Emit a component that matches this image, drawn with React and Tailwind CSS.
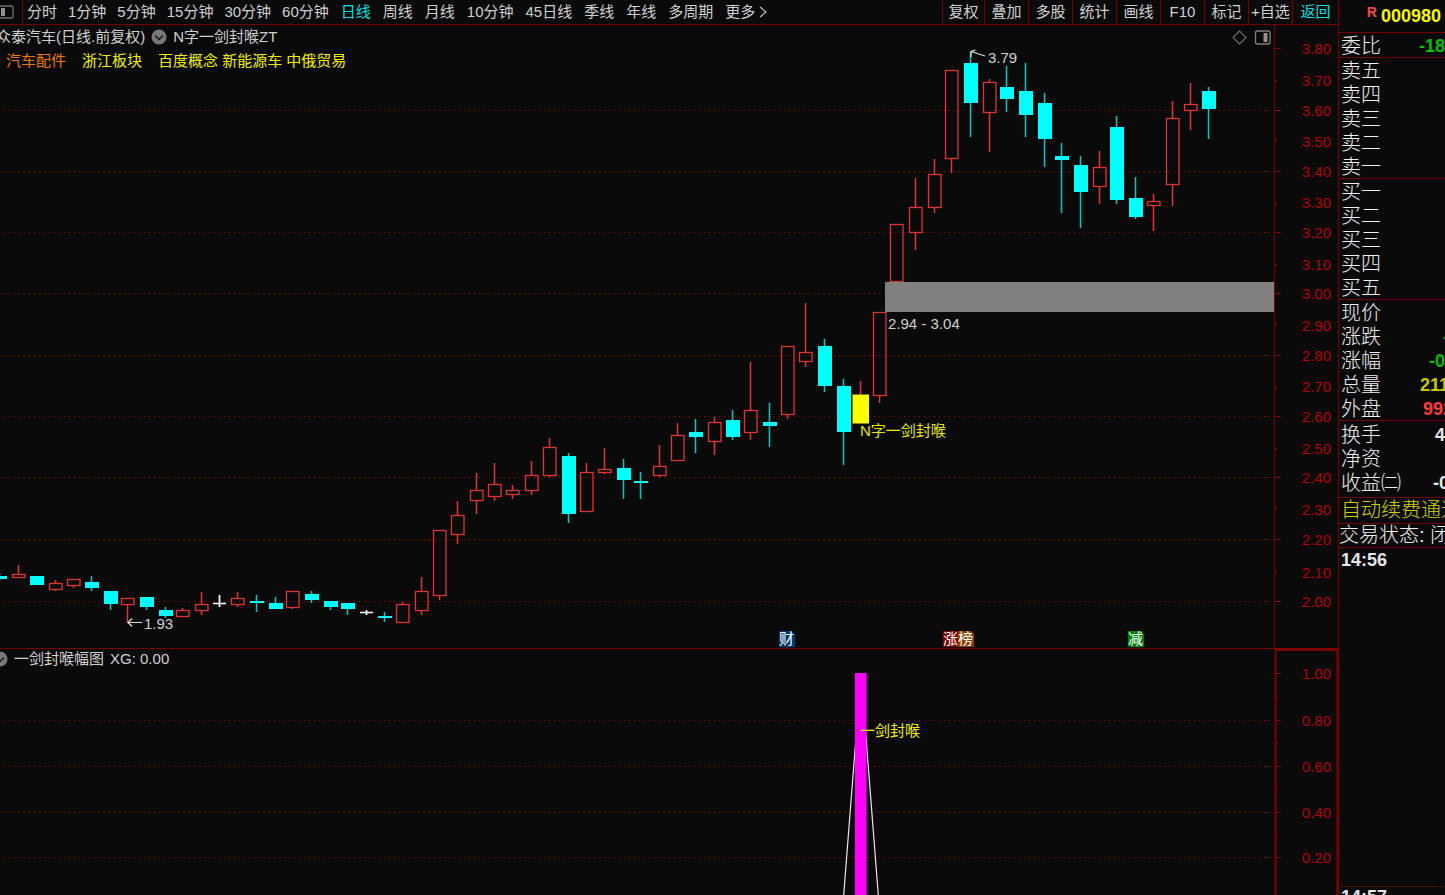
import React, { useState } from "react";

const minutePeriods = ["分时", "1分钟", "5分钟", "15分钟", "30分钟", "60分钟"];

const longPeriods = [
  "日线", "周线", "月线", "10分钟", "45日线", "季线", "年线", "多周期", "更多",
];

const tools = ["复权", "叠加", "多股", "统计", "画线", "F10", "标记", "+自选"];

// type, center x, body top, body bottom, wick top, wick bottom
// u = up (hollow red), d = down (solid cyan), f = flat (white), y = signal bar
const candles = [
  ["d", 0, 576, 579, 573, 581],
  ["u", 19, 574, 577, 565, 578],
  ["d", 36.5, 576, 585, 576, 585],
  ["u", 55.5, 583, 589, 580, 591],
  ["u", 74, 579, 585, 579, 588],
  ["d", 91.5, 582, 588, 576, 591],
  ["d", 110.5, 591, 604, 591, 610],
  ["u", 128, 598, 604, 598, 623],
  ["d", 146.5, 597, 607, 597, 610],
  ["d", 165.5, 610, 616, 607, 618],
  ["u", 183, 610, 616, 608, 616],
  ["u", 202, 604, 610, 592, 615],
  ["f", 220, 603, 604, 595, 607],
  ["u", 238, 598, 604, 592, 607],
  ["d", 256.5, 601, 603, 595, 612],
  ["d", 275.5, 603, 609, 597, 609],
  ["u", 293, 591, 607, 591, 609],
  ["d", 311.5, 594, 600, 591, 603],
  ["d", 330.5, 601, 607, 601, 610],
  ["d", 348, 603, 609, 603, 615],
  ["f", 366.5, 612, 613, 610, 615],
  ["d", 384.5, 616, 618, 612, 622],
  ["u", 403, 604, 622, 602, 622],
  ["u", 421.5, 591, 610, 577, 615],
  ["u", 439.5, 530, 595, 530, 600],
  ["u", 458, 515, 534, 501, 544],
  ["u", 477, 490, 500, 473, 514],
  ["u", 494.5, 484, 496, 463, 501],
  ["u", 513, 490, 494, 485, 499],
  ["u", 532, 475, 490, 461, 495],
  ["u", 549.5, 447, 475, 438, 477],
  ["d", 568.5, 456, 514, 453, 523],
  ["u", 587, 472, 511, 463, 511],
  ["u", 604.5, 469, 472, 448, 474],
  ["d", 623.5, 468, 480, 459, 499],
  ["d", 640.5, 481, 483, 472, 499],
  ["u", 659.5, 466, 475, 445, 477],
  ["u", 678, 435, 460, 423, 461],
  ["d", 695.5, 432, 437, 419, 453],
  ["u", 714.5, 422, 441, 417, 455],
  ["d", 733, 420, 437, 410, 440],
  ["u", 750.5, 410, 432, 362, 440],
  ["d", 769.5, 422, 426, 403, 447],
  ["u", 788, 346, 414, 346, 419],
  ["u", 805.5, 352, 361, 303, 367],
  ["d", 824.5, 346, 386, 339, 392],
  ["d", 843.5, 386, 432, 379, 465],
  ["y", 860.5, 395, 423, 381, 423],
  ["u", 879.5, 312, 395, 312, 403],
  ["u", 897, 224, 281, 224, 281],
  ["u", 915.5, 207, 232, 178, 250],
  ["u", 934.5, 174, 207, 159, 213],
  ["u", 952, 70, 158, 70, 173],
  ["d", 970.5, 63, 103, 52, 137],
  ["u", 989.5, 82, 112, 79, 152],
  ["d", 1007, 87, 99, 66, 112],
  ["d", 1025.5, 91, 115, 63, 137],
  ["d", 1044.5, 103, 139, 93, 167],
  ["d", 1062, 156, 160, 143, 213],
  ["d", 1080.5, 165, 192, 156, 228],
  ["u", 1099.5, 167, 186, 151, 204],
  ["d", 1117, 127, 200, 116, 204],
  ["d", 1135.5, 198, 217, 177, 219],
  ["u", 1153.5, 201, 205, 194, 231],
  ["u", 1172.5, 118, 184, 101, 206],
  ["u", 1190.5, 104, 110, 83, 130],
  ["d", 1208.5, 91, 109, 87, 139],
];

// label, tick y
const priceTicks = [
  ["3.80", 48], ["3.70", 80], ["3.60", 110], ["3.50", 141], ["3.40", 171],
  ["3.30", 202], ["3.20", 232], ["3.10", 264], ["3.00", 293], ["2.90", 325],
  ["2.80", 355], ["2.70", 386], ["2.60", 416], ["2.50", 448], ["2.40", 477],
  ["2.30", 509], ["2.20", 539], ["2.10", 572], ["2.00", 601],
];

const ratioTicks = [["1.00", 673], ["0.80", 720], ["0.60", 766], ["0.40", 812], ["0.20", 857]];

const events = [
  ["财", 779, "#003a70"],
  ["涨", 943, "#800000"],
  ["榜", 958, "#8a4000"],
  ["减", 1128, "#008000"],
];

const quoteGroups = [
  [["卖五"], ["卖四"], ["卖三"], ["卖二"], ["卖一"]],
  [["买一"], ["买二"], ["买三"], ["买四"], ["买五"]],
  [
    ["现价"],
    ["涨跌", "-", "text-[#00c000] -mr-1"],
    ["涨幅", "-0", "text-[#00c000]"],
    ["总量", "211", "text-[#c8c800] -mr-1"],
    ["外盘", "992", "text-[#ff3838] -mr-2"],
  ],
];

const detailRows = [
  ["换手", "4", "text-[#e6e6e6]"],
  ["净资"],
  ["收益㈡", "-0", "text-[#e6e6e6] -mr-1"],
];

const Candle = ({ data }) => {
  const [type, x, top, bottom, high, low] = data;
  const color = type === "u" || type === "y" ? "#e03434" : type === "d" ? "#00c8c8" : "#e0e0e0";
  const left = Math.round(x - 7);
  const mid = left + 6.5;
  return (
    <g>
      {high < top && <path d={`M${mid} ${high}V${top}`} stroke={color} strokeWidth="1.5" />}
      {low > bottom && <path d={`M${mid} ${bottom}V${low}`} stroke={color} strokeWidth="1.5" />}
      {type === "u" && (
        <rect x={left + 0.5} y={top + 0.5} width="12.5" height={bottom - top} fill="none" stroke="#e03434" strokeWidth="1.3" />
      )}
      {type === "d" && <rect x={left} y={top} width="14" height={bottom - top} fill="#00ffff" />}
      {type === "f" && (
        <path d={`M${left} ${top + 0.5}h13M${mid} ${high}V${low}`} stroke="#ffffff" strokeWidth="1.4" />
      )}
      {type === "y" && <rect x="852.5" y={top - 0.5} width="16.5" height="29" fill="#ffff00" />}
    </g>
  );
};

const GridLine = ({ y }) => (
  <path d={`M4 ${y + 0.5}H1273`} stroke="#a00000" strokeDasharray="1 4" />
);

const AxisLabel = ({ y, children }) => (
  <text x="1331" y={y} textAnchor="end" fontSize="15" fill="#b00000">
    {children}
  </text>
);

const Chevron = () => (
  <svg viewBox="0 0 16 16" className="h-4 w-4 shrink-0">
    <circle cx="8" cy="8" r="7.5" fill="#787878" />
    <path d="M4 6.5L8 10.5L12 6.5" fill="none" stroke="#161616" strokeWidth="1.5" />
  </svg>
);

const PriceChart = () => (
  <svg viewBox="0 25 1338 623" className="col-start-1 row-start-1 block w-full">
    {priceTicks.map(([label, y], i) => (
      <g key={label}>
        {i > 0 && i % 2 === 0 && <GridLine y={y} />}
        <path d={`M1275 ${y + 0.5}h${i % 2 ? 2 : 6}`} stroke="#8c0000" />
        <AxisLabel y={y + 6}>{label}</AxisLabel>
      </g>
    ))}
    <path d="M1274.5 25V648" stroke="#780000" />
    {candles.map((c) => (
      <Candle key={c[1]} data={c} />
    ))}
    <rect x="885" y="282" width="389" height="30" fill="#808080" />
    <g fill="none" stroke="#e0e0e0" strokeWidth="1.2">
      <path d="M985 56L971 51.5M971 57V51.5L975.5 50" />
      <path d="M142 622.5H128M132 618.5L128 622.5L132 626.5" />
    </g>
    <g fontSize="15" fill="#d0d0d0">
      <text x="988" y="63">3.79</text>
      <text x="144" y="629">1.93</text>
      <text x="888" y="329">2.94 - 3.04</text>
    </g>
    <text x="860" y="436" fontSize="15" fill="#e8e800">N字一剑封喉</text>
    {events.map(([label, x, fill]) => (
      <g key={label}>
        <path d={`M${x} 631h13l3 3v13h-16z`} fill={fill} />
        <text x={x} y="644" fontSize="15" fill="#ffffff">{label}</text>
      </g>
    ))}
    <g fill="none" stroke="#646464" strokeWidth="1.3">
      <path d="M1239.5 31L1246 37.5L1239.5 44L1233 37.5Z" />
      <rect x="1255.5" y="31" width="14.5" height="13" rx="2" stroke="#808080" />
    </g>
    <rect x="1263.5" y="33" width="4" height="9" fill="#909090" />
  </svg>
);

const SignalChart = () => (
  <svg viewBox="0 649 1338 246" className="col-start-1 row-start-1 block w-full">
    {ratioTicks.map(([label, y], i) => (
      <g key={label}>
        {i > 0 && <GridLine y={y} />}
        <path d={`M1276 ${y + 0.5}h5`} stroke="#8c0000" />
        {i > 0 && <path d={`M1276 ${y - 22.5}h2`} stroke="#8c0000" />}
        <AxisLabel y={y + 6}>{label}</AxisLabel>
      </g>
    ))}
    <path d="M1275.5 895V650H1337.5V895" fill="none" stroke="#800000" strokeWidth="2" />
    <path d="M843 904L861 673L879 904" fill="none" stroke="#e8e8e8" strokeWidth="1.2" />
    <rect x="855" y="673" width="11.5" height="222" fill="#ff00ff" />
    <text x="860" y="736" fontSize="15" fill="#f0f000">一剑封喉</text>
  </svg>
);

const PeriodButton = ({ name, active, onSelect }) => (
  <button onClick={() => onSelect(name)} className={active ? "text-[#00e0e0]" : ""}>
    {name}
  </button>
);

const QuoteRow = ({ row: [label, value, style] }) => (
  <div className="flex h-6 items-center justify-between pt-[2px] whitespace-nowrap">
    <span>{label}</span>
    {value && <span className={`text-lg font-bold ${style}`}>{value}</span>}
  </div>
);

const QuotePanel = () => (
  <aside className="w-[107px] shrink-0 overflow-hidden border-l border-[#780000] text-xl font-light text-[#f0f0f0]">
    <div className="flex h-[33px] items-start justify-end gap-1 border-b border-[#780000] pr-1 font-bold">
      <span className="pt-1 text-sm leading-4 text-[#f04848]">R</span>
      <span className="text-lg leading-8 text-[#f8f800]">000980</span>
    </div>
    <div className="border-b border-[#780000] pl-[2px]">
      <QuoteRow row={["委比", "-18", "text-[#00c000]"]} />
    </div>
    {quoteGroups.map((rows) => (
      <div key={rows[0][0]} className="border-b border-[#780000] pl-[2px]">
        {rows.map((row) => (
          <QuoteRow key={row[0]} row={row} />
        ))}
      </div>
    ))}
    <div className="border-b border-[#780000] pt-[1px] pb-[3px] pl-[2px]">
      {detailRows.map((row) => (
        <QuoteRow key={row[0]} row={row} />
      ))}
    </div>
    <p className="border-b border-[#780000] pl-[2px] leading-[25px] whitespace-nowrap text-[#d0d000]">
      自动续费通道
    </p>
    <p className="border-b border-[#780000] leading-[23px] whitespace-nowrap">交易状态: 闭</p>
    <div className="h-[338px] pl-[2px] text-lg leading-6 font-bold text-[#e6e6e6]">14:56</div>
    <div className="mx-[2px] border-t border-dotted border-[#780000] text-lg leading-5 font-bold text-[#e6e6e6]">
      14:57
    </div>
  </aside>
);

const App = () => {
  const [period, setPeriod] = useState("日线");

  return (
    <div className="flex h-screen overflow-hidden bg-[#0a0a0a] font-['Liberation_Sans','Noto_Sans_CJK_SC',sans-serif] text-[15px] text-[#d0d0d0]">
      <main className="min-w-0 flex-1">
        <nav className="flex h-[25px] justify-between border-b border-[#780000] whitespace-nowrap">
          <div className="flex items-center">
            <button aria-label="侧栏" className="flex h-full w-[23px] items-center border-r border-[#780000]">
              <svg viewBox="0 0 14 14" className="h-[14px] w-[14px]">
                <rect x="-2" y="1" width="15" height="12" rx="2" fill="none" stroke="#707070" strokeWidth="1.3" />
                <rect x="1" y="3" width="4" height="8" fill="#909090" />
              </svg>
            </button>
            <div className="flex items-center gap-[11px] pl-1">
              {minutePeriods.map((p) => (
                <PeriodButton key={p} name={p} active={p === period} onSelect={setPeriod} />
              ))}
            </div>
            <div className="flex items-center gap-3 pl-3">
              {longPeriods.map((p) => (
                <PeriodButton key={p} name={p} active={p === period} onSelect={setPeriod} />
              ))}
            </div>
            <svg viewBox="0 0 8 12" className="ml-1 h-3 w-2">
              <path d="M1 1L7 6L1 11" fill="none" stroke="#c0c0c0" strokeWidth="1.2" />
            </svg>
          </div>
          <div className="flex">
            {tools.map((tool) => (
              <button key={tool} className="w-11 border-l border-[#780000] text-center first:w-[42px]">
                {tool}
              </button>
            ))}
            <button className="w-[46px] border-l border-[#780000] text-[#00e0e0]">返回</button>
          </div>
        </nav>

        <section className="grid">
          <PriceChart />
          <header className="z-10 col-start-1 row-start-1 leading-6 whitespace-nowrap">
            <div className="-ml-1 flex items-center gap-[6px]">
              <h1>众泰汽车(日线.前复权)</h1>
              <Chevron />
              <span>N字一剑封喉ZT</span>
            </div>
            <div className="flex gap-4 pl-[6px] text-[#f0f000]">
              <span className="text-[#f07800]">汽车配件</span>
              <span>浙江板块</span>
              <span>百度概念 新能源车 中俄贸易</span>
            </div>
          </header>
        </section>

        <section className="grid border-t border-[#780000]">
          <SignalChart />
          <header className="z-10 col-start-1 row-start-1 -ml-2 flex h-5 items-center gap-[6px] whitespace-nowrap">
            <Chevron />
            <h2>一剑封喉幅图</h2>
            <span>XG: 0.00</span>
          </header>
        </section>
      </main>
      <QuotePanel />
    </div>
  );
};

export default App;
